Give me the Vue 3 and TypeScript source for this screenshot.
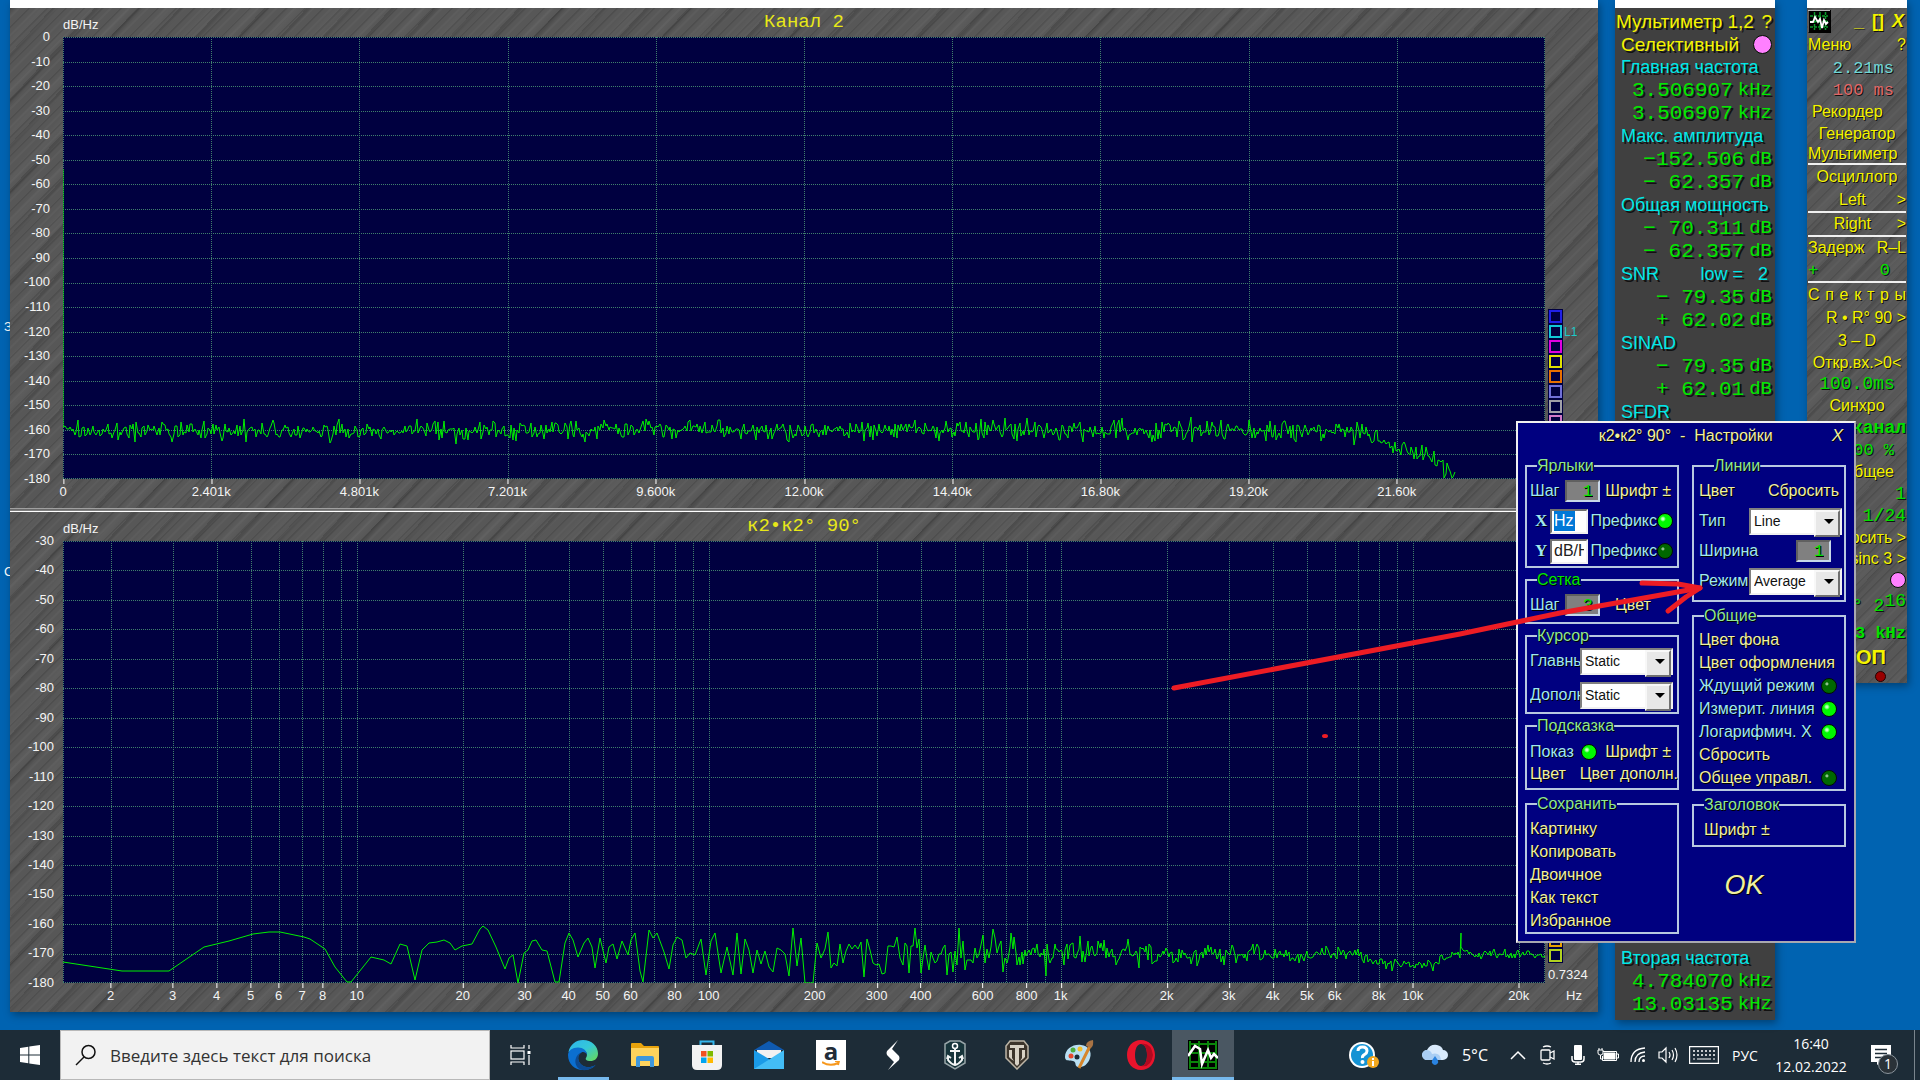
<script setup lang="ts">
import { ref } from 'vue'

interface Tick {
  at: number
  label: string
}

const PLOT_W = 1482
const PLOT_H = 442

function makeNoise(seed: number): () => number {
  let state = seed
  const next = () => {
    state = (state * 1664525 + 1013904223) % 4294967296
    return state / 4294967296
  }
  return () => next() + next() + next() - 1.5
}

function interpolate(table: number[][], x: number): number {
  for (let i = 1; i < table.length; i++) {
    if (x <= table[i][0]) {
      const [x0, y0] = table[i - 1]
      const [x1, y1] = table[i]
      return y0 + ((y1 - y0) * (x - x0)) / (x1 - x0)
    }
  }
  return table[table.length - 1][1]
}

// Linear spectrum: flat noise floor that rolls off near 22 kHz
const linearFloor = [[0, 393], [1270, 393], [1300, 397], [1324, 407], [1357, 417], [1372, 424], [1390, 442], [1482, 520]]

function linearTrace(): string {
  const noise = makeNoise(77)
  const points = ['0,132', '0,390']
  for (let x = 2; x <= 1392; x += x % 3 === 0 ? 1 : 2) {
    const y = interpolate(linearFloor, x) + noise() * 10
    points.push(`${x},${Math.min(PLOT_H, Math.round(y))}`)
  }
  return points.join(' ')
}

// Logarithmic spectrum: sparse bins on the left, dense ones on the right
const sparseBins = '0,421 59,430 106,430 141,406 166,400 190,393 206,391 217,391 241,396 247,398 262,408 272,426 284,441 288,441 308,416 321,419 328,423 337,403 344,405 352,439 359,409 366,402 374,401 381,399 387,402 392,409 399,405 409,403 417,388 420,385 425,389 433,406 442,428 446,417 450,414 455,442 461,412 465,409 469,400 473,399 479,409 484,410 492,441 496,441 502,402 506,392 510,399 515,416 521,402 525,397 529,406 532,427 537,397 543,422 546,406 550,403 554,418 559,400 565,414 568,399 572,392 577,430 580,441 586,389 590,397 594,392 601,411 606,428 610,404 614,396 619,399 623,417 627,412 632,414 638,398 643,434 648,400 652,392 658,432 664,406 670,434'

const denseFloor = [[0, 413], [1290, 413], [1302, 419], [1330, 423], [1370, 422], [1392, 413], [1482, 414]]
const denseSwing = [[660, 42], [760, 36], [860, 24], [1000, 18], [1120, 12], [1220, 9], [1300, 7], [1482, 5]]

function logTrace(): string {
  const noise = makeNoise(2022)
  const points = [sparseBins]
  for (let x = 674; x <= PLOT_W; x += x < 760 ? 4 : x < 840 ? 3 : x < 940 ? 2 : x % 3 === 0 ? 2 : 1) {
    const y = interpolate(denseFloor, x) + noise() * interpolate(denseSwing, x)
    points.push(`${x},${Math.max(387, Math.min(PLOT_H, Math.round(y)))}`)
    if (x === 1396 || x === 1397) points.push('1398,392')
  }
  return points.join(' ')
}

const linearTicks: Tick[] = ['0', '2.401k', '4.801k', '7.201k', '9.600k', '12.00k', '14.40k', '16.80k', '19.20k', '21.60k']
  .map((label, i) => ({ at: i * 10, label }))

const LOG_MIN = Math.log10(1.4648)
const LOG_SPAN = Math.log10(23750) - LOG_MIN
const logAt = (f: number) => ((Math.log10(f) - LOG_MIN) / LOG_SPAN) * 100

const logGrid: number[] = []
for (let decade = 1; decade <= 10000; decade *= 10) {
  for (let n = 1; n < 10; n++) {
    const f = n * decade
    if (f >= 2 && f <= 20000) logGrid.push(logAt(f))
  }
}

const logTicks: Tick[] = [2, 3, 4, 5, 6, 7, 8, 10, 20, 30, 40, 50, 60, 80, 100, 200, 300, 400, 600, 800, 1000, 2000, 3000, 4000, 5000, 6000, 8000, 10000, 20000]
  .map((f) => ({ at: logAt(f), label: f >= 1000 ? `${f / 1000}k` : `${f}` }))

const range = (from: number, count: number) => Array.from({ length: count }, (_, i) => from - i * 10)

const charts = [
  {
    title: 'Канал 2',
    levels: range(0, 19),
    ticks: linearTicks,
    grid: linearTicks.map((t) => t.at),
    trace: linearTrace(),
    swatches: ['#2020e8', '#10c8d8', '#e000e0', '#e0e000', '#e87000', '#7070d8', '#a0a0a8', '#d078c8', '#50a050', '#c04040'],
    bottom: false,
  },
  {
    title: 'к2•к2° 90°',
    levels: range(-30, 16),
    ticks: logTicks,
    grid: [0, ...logGrid],
    trace: logTrace(),
    swatches: ['#e8a000', '#b0d020'],
    bottom: true,
  },
]

interface Reading {
  kind: 'head' | 'value'
  text: string
  unit?: string
}

const head = (text: string): Reading => ({ kind: 'head', text })
const value = (text: string, unit: string): Reading => ({ kind: 'value', text, unit })

const readings: Reading[] = [
  head('Главная частота'), value('3.506907', 'kHz'), value('3.506907', 'kHz'),
  head('Макс. амплитуда'), value('−152.506', 'dB'), value('− 62.357', 'dB'),
  head('Общая мощность'), value('− 70.311', 'dB'), value('− 62.357', 'dB'),
  head('SNR'), value('− 79.35', 'dB'), value('+ 62.02', 'dB'),
  head('SINAD'), value('− 79.35', 'dB'), value('+ 62.01', 'dB'),
  head('SFDR'),
]
const lastReadings: Reading[] = [head('Вторая частота'), value('4.784070', 'kHz'), value('13.03135', 'kHz')]

const labelStep = ref('1')
const unitX = ref('Hz')
const unitY = ref('dB/Hz')
const prefixX = ref(true)
const prefixY = ref(false)
const gridStep = ref('3')
const mainCursor = ref('Static')
const extraCursor = ref('Static')
const hintShown = ref(true)
const lineType = ref('Line')
const lineWidth = ref('1')
const lineMode = ref('Average')
const waiting = ref(false)
const measureLine = ref(true)
const logX = ref(true)
const sharedControl = ref(false)
const saveActions = ['Картинку', 'Копировать', 'Двоичное', 'Как текст', 'Избранное']
</script>

<template>
  <div class="screen">
    <main class="desktop">
      <span class="shortcut shortcut-a">З</span>
      <span class="shortcut shortcut-b">С</span>

      <section class="window spectra steel">
        <article v-for="chart in charts" :key="chart.title" class="chart">
          <header class="chart-head">
            <span class="unit">dB/Hz</span>
            <h2 class="chart-title">{{ chart.title }}</h2>
          </header>
          <div class="chart-body">
            <div class="levels" :class="{ near: chart.bottom }">
              <span v-for="level in chart.levels" :key="level">{{ level }}</span>
            </div>
            <svg class="plot" :viewBox="`0 0 ${PLOT_W} ${PLOT_H}`" preserveAspectRatio="none">
              <g class="grid">
                <line v-for="(level, i) in chart.levels" :key="level" x1="0" :x2="PLOT_W"
                  :y1="Math.min(PLOT_H - 1, Math.round((i * PLOT_H) / (chart.levels.length - 1))) + 0.5"
                  :y2="Math.min(PLOT_H - 1, Math.round((i * PLOT_H) / (chart.levels.length - 1))) + 0.5" />
                <line v-for="at in [...chart.grid, 99.9]" :key="at" y1="0" :y2="PLOT_H"
                  :x1="Math.round((at * PLOT_W) / 100) + 0.5" :x2="Math.round((at * PLOT_W) / 100) + 0.5" />
              </g>
              <polyline class="trace" :points="chart.trace" />
            </svg>
            <div class="side" :class="{ low: chart.bottom }">
              <div v-for="(color, i) in chart.swatches" :key="color" class="swatch-row">
                <button class="swatch" type="button" :style="{ borderColor: color }" :aria-label="`Линия ${i + 1}`"></button>
                <span v-if="!chart.bottom && i === 1" class="swatch-name">L1</span>
              </div>
              <span v-if="chart.bottom" class="resolution">0.7324</span>
            </div>
          </div>
          <footer class="chart-foot">
            <div class="ticks">
              <span v-for="tick in chart.ticks" :key="tick.label" class="tick" :style="{ left: tick.at + '%' }">{{ tick.label }}</span>
            </div>
            <span class="foot-unit">{{ chart.bottom ? 'Hz' : '' }}</span>
          </footer>
        </article>
      </section>

      <section class="window meter">
        <div class="meter-row meter-title"><span>Мультиметр 1,2</span><button type="button" class="bare">?</button></div>
        <label class="meter-row meter-select"><span>Селективный</span><input type="checkbox" class="led pink big" checked /></label>
        <div v-for="(r, i) in readings" :key="i" class="meter-row" :class="r.kind">
          <span>{{ r.text }}</span>
          <span v-if="r.text === 'SNR'" class="low-limit">low =&nbsp;&nbsp; 2</span>
          <span v-if="r.unit" class="meter-unit">{{ r.unit }}</span>
        </div>
        <div class="meter-tail">
          <div v-for="(r, i) in lastReadings" :key="i" class="meter-row" :class="r.kind">
            <span>{{ r.text }}</span>
            <span v-if="r.unit" class="meter-unit">{{ r.unit }}</span>
          </div>
        </div>
      </section>

      <nav class="window menu steel">
        <div class="row r24 title-row">
          <svg width="23" height="23" viewBox="0 0 23 23">
            <rect width="23" height="23" fill="#000" />
            <path d="M0 22.500V.5H22" fill="none" stroke="#b8b8b8" />
            <path d="M2 6h18M2 11.500h18M2 17h18M6.500 2v18M12 2v18M17.500 2v18" stroke="#0b9a2a" stroke-width="1.500" stroke-dasharray="3 1" />
            <path d="M2 12h3l2-5 3 5 2-3 2 9 2-8 2 4 2-2" fill="none" stroke="#fff" stroke-width="1.800" />
          </svg>
          <span class="window-keys"><button type="button" class="bare">_</button><button type="button" class="bare">[]</button><button type="button" class="bare slanted">X</button></span>
        </div>
        <div class="row r24 split"><button type="button" class="bare">Меню</button><button type="button" class="bare">?</button></div>
        <div class="row r22 mono aqua inset">2.21<b>ms</b></div>
        <div class="row r22 mono rose inset">100 <b>ms</b></div>
        <button type="button" class="bare row r22 indent">Рекордер</button>
        <button type="button" class="bare row r22 center">Генератор</button>
        <button type="button" class="bare row r20 ruled">Мультиметр</button>
        <button type="button" class="bare row r24 center">Осциллогр</button>
        <div class="row r24 ruled split"><i></i><button type="button" class="bare">Left</button><button type="button" class="bare">&gt;</button></div>
        <div class="row r24 ruled split"><i></i><button type="button" class="bare">Right</button><button type="button" class="bare">&gt;</button></div>
        <div class="row r22 split"><span>Задерж</span><span>R–L</span></div>
        <div class="row r24 ruled split mono green"><span>+</span><span class="zero">0</span></div>
        <div class="row r24 split"><span v-for="(c, i) in 'Спектры'" :key="i">{{ c }}</span></div>
        <div class="row r22 end"><button type="button" class="bare">R • R° 90 &gt;</button></div>
        <button type="button" class="bare row r24 center">3 – D</button>
        <button type="button" class="bare row r20 center">Откр.вх.&gt;0&lt;</button>
        <div class="row r22 mono large green center">100.0<b>ms</b></div>
        <button type="button" class="bare row r22 center">Синхро</button>
        <div class="row r22 mono large green end"><b>канал</b></div>
        <div class="row r22 mono green end inset">100 %</div>
        <div class="row r22 end inset"><span>Общее</span></div>
        <div class="row r22 mono large green end">1</div>
        <div class="row r22 mono large green end">1/24</div>
        <div class="row r22 end"><span>Сбросить &gt;</span></div>
        <div class="row r20 end"><span>sinc 3 &gt;</span></div>
        <div class="row r22 end"><input type="checkbox" class="led pink" aria-label="Фильтр" checked /></div>
        <div class="row r30 mono large green end">R° 2<sup>16</sup></div>
        <div class="row r24 mono green end"><b>3 kHz</b></div>
        <div class="row r24 end stop-row"><button type="button" class="bare stop">СТОП</button></div>
        <div class="row r14 end inset"><span class="lamp"></span></div>
      </nav>

      <form class="dialog" @submit.prevent>
        <header class="dialog-head">
          <h1>к2•к2° 90°&nbsp; -&nbsp; Настройки</h1>
          <button type="button" class="bare slanted close">X</button>
        </header>
        <div class="columns">
          <div class="column">
            <fieldset>
              <legend>Ярлыки</legend>
              <div class="line"><label class="step" for="label-step">Шаг</label><input id="label-step" v-model="labelStep" class="number" type="text" /><button type="button" class="bare push">Шрифт ±</button></div>
              <div class="line"><label class="axis" for="unit-x">X</label><span class="unit-box"><input id="unit-x" v-model="unitX" class="picked" type="text" /></span><label class="prefix">Префикс<input v-model="prefixX" class="led" type="checkbox" /></label></div>
              <div class="line"><label class="axis" for="unit-y">Y</label><span class="unit-box"><input id="unit-y" v-model="unitY" type="text" /></span><label class="prefix">Префикс<input v-model="prefixY" class="led" type="checkbox" /></label></div>
            </fieldset>
            <fieldset class="grid-box">
              <legend class="active">Сетка</legend>
              <div class="line"><label class="step" for="grid-step">Шаг</label><input id="grid-step" v-model="gridStep" class="number" type="text" /><button type="button" class="bare shifted">Цвет</button></div>
            </fieldset>
            <fieldset class="cursor-box">
              <legend>Курсор</legend>
              <div class="line tall"><label class="clipped" for="main-cursor">Главный</label><span class="combo"><select id="main-cursor" v-model="mainCursor"><option>Static</option></select></span></div>
              <div class="line tall"><label class="clipped" for="extra-cursor">Дополн.</label><span class="combo"><select id="extra-cursor" v-model="extraCursor"><option>Static</option></select></span></div>
            </fieldset>
            <fieldset class="hint-box">
              <legend>Подсказка</legend>
              <div class="line short"><label class="show">Показ<input v-model="hintShown" class="led" type="checkbox" /></label><button type="button" class="bare push">Шрифт ±</button></div>
              <div class="line short"><button type="button" class="bare">Цвет</button><button type="button" class="bare extra">Цвет дополн.</button></div>
            </fieldset>
            <fieldset class="save-box">
              <legend>Сохранить</legend>
              <div v-for="action in saveActions" :key="action" class="line short"><button type="button" class="bare">{{ action }}</button></div>
            </fieldset>
          </div>
          <div class="column right">
            <fieldset class="lines-box">
              <legend class="deep">Линии</legend>
              <div class="line spread"><button type="button" class="bare">Цвет</button><button type="button" class="bare">Сбросить</button></div>
              <div class="line"><label class="clipped" for="line-type">Тип</label><span class="combo"><select id="line-type" v-model="lineType"><option>Line</option></select></span></div>
              <div class="line spread"><label for="line-width">Ширина</label><input id="line-width" v-model="lineWidth" class="number away" type="text" /></div>
              <div class="line"><label class="clipped" for="line-mode">Режим</label><span class="combo"><select id="line-mode" v-model="lineMode"><option>Average</option></select></span></div>
            </fieldset>
            <fieldset class="common-box">
              <legend>Общие</legend>
              <div class="line short"><button type="button" class="bare">Цвет фона</button></div>
              <div class="line short"><button type="button" class="bare">Цвет оформления</button></div>
              <label class="line short spread">Ждущий режим<input v-model="waiting" class="led" type="checkbox" /></label>
              <label class="line short spread">Измерит. линия<input v-model="measureLine" class="led" type="checkbox" /></label>
              <label class="line short spread">Логарифмич. X<input v-model="logX" class="led" type="checkbox" /></label>
              <div class="line short"><button type="button" class="bare">Сбросить</button></div>
              <label class="line short spread warm">Общее управл.<input v-model="sharedControl" class="led" type="checkbox" /></label>
            </fieldset>
            <fieldset class="heading-box">
              <legend>Заголовок</legend>
              <div class="line short"><button type="button" class="bare">Шрифт ±</button></div>
            </fieldset>
            <button type="submit" class="bare slanted ok">OK</button>
          </div>
        </div>
      </form>

      <svg class="markup" width="760" height="760" viewBox="0 0 760 760" aria-hidden="true">
        <g fill="none" stroke="#ed1c24" stroke-width="5" stroke-linecap="round" stroke-linejoin="round">
          <path d="M14 688L300 634L400 613L540 588" />
          <path d="M482 583L518 584L540 588L526 597L508 611" />
        </g>
        <ellipse cx="165" cy="736" rx="3" ry="2" fill="#ed1c24" />
      </svg>
    </main>

    <footer class="taskbar">
      <button type="button" class="task start" aria-label="Пуск">
        <svg width="20" height="20" viewBox="0 0 20 20" fill="#fff"><path d="M0 3l8.300-1.200v7.700H0zM9.300 1.600L20 0v9.500H9.300zM0 10.500h8.300v7.700L0 17zM9.300 10.500H20V20L9.300 18.400z" /></svg>
      </button>
      <label class="search">
        <svg width="22" height="22" viewBox="0 0 22 22" fill="none" stroke="#111" stroke-width="1.500"><circle cx="13.500" cy="8" r="6.500" /><path d="M9 13L1 21" /></svg>
        <input type="text" placeholder="Введите здесь текст для поиска" aria-label="Поиск" />
      </label>
      <button type="button" class="task" aria-label="Представление задач">
        <svg width="22" height="20" viewBox="0 0 22 20" fill="none" stroke="#fff" stroke-width="1.200"><path d="M1 0v3h13V0M1 20v-3h13v3M19 0v4M19 10v10" /><rect x="1" y="6" width="13" height="8" /><path d="M17.500 6h3v3h-3z" fill="#fff" stroke="none" /></svg>
      </button>
      <button type="button" class="task open" aria-label="Edge">
        <svg width="32" height="32" viewBox="0 0 32 32">
          <defs>
            <linearGradient id="edge-top" x1="0" y1="0" x2="1" y2="1"><stop offset="0" stop-color="#2db4ee" /><stop offset=".5" stop-color="#35c8d8" /><stop offset="1" stop-color="#6bdc50" /></linearGradient>
          </defs>
          <path d="M1.500 13C3 5.500 9 1 16 1c8.500 0 15 6 15 13.500 0 5-3.500 7.500-7.500 7.500-4 0-5.500-1.500-4.500-3 3-5-1-8.500-6-8.500-5 0-10 2-11.500 2.500z" fill="url(#edge-top)" />
          <path d="M1 16c0-4.500 4.500-7.500 10-7.500 5 0 9 3 9 7.500-1-2.500-3.500-3.500-5.500-2.500-4.500 2-4.500 9.500 1 13 4 2.500 9 2 13-.5C25.500 30 20.500 31 16 31 8 31 1 25 1 16z" fill="#0b6fd0" />
          <path d="M14.500 13.500c-4.500 2-4.500 9.500 1 13 4.500 3 10 1.500 13.500-1-4 5-10 6.500-15 5.300C6 27.500 7 16 14.500 13.500z" fill="#0c4a92" />
        </svg>
      </button>
      <button type="button" class="task" aria-label="Проводник">
        <svg width="30" height="26" viewBox="0 0 30 26"><path d="M1 2q0-1 1-1h9l3 3h14q1 0 1 1v8H1z" fill="#e8a30c" /><path d="M1 6h28v17q0 1-1 1H2q-1 0-1-1z" fill="#ffd35c" /><path d="M6 25V16q0-2 2-2h14q2 0 2 2v9h-4v-6H10v6z" fill="#3f97dc" /></svg>
      </button>
      <button type="button" class="task" aria-label="Магазин">
        <svg width="30" height="30" viewBox="0 0 30 30"><path d="M8.500 6V1.500h13V6" fill="none" stroke="#35b6ec" stroke-width="2" /><path d="M0 5h30v20q0 5-5 5H5q-5 0-5-5z" fill="#f2f2f2" /><path d="M9 11h5.500v5.500H9z" fill="#f25022" /><path d="M15.500 11H21v5.500h-5.500z" fill="#7fba00" /><path d="M9 17.500h5.500V23H9z" fill="#00a4ef" /><path d="M15.500 17.500H21V23h-5.500z" fill="#ffb900" /></svg>
      </button>
      <button type="button" class="task" aria-label="Почта">
        <svg width="30" height="28" viewBox="0 0 30 28"><path d="M0 9L15 0l15 9z" fill="#0f5ab0" /><path d="M3 9h24v8H3z" fill="#f1f1f1" /><path d="M0 9l15 9v10H0z" fill="#1a9be8" /><path d="M30 9v19H0z" fill="#43bdf6" /><path d="M3 9h24L15 17z" fill="#f1f1f1" /></svg>
      </button>
      <button type="button" class="task" aria-label="Amazon">
        <span class="amazon">a<svg width="18" height="6" viewBox="0 0 18 6" fill="none" stroke="#f7981d" stroke-width="2"><path d="M0 1q8 5 16 1M13 0l4 0-1 4" /></svg></span>
      </button>
      <button type="button" class="task" aria-label="S">
        <svg width="14" height="30" viewBox="0 0 14 30" fill="#fff"><path d="M12 0L1 11q-1 2 0 4l7 7-6 8 11-10q1-2 0-4L6 9z" /></svg>
      </button>
      <button type="button" class="task" aria-label="Корабли">
        <svg width="22" height="30" viewBox="0 0 22 30" fill="none"><path d="M1 4L6 1h10l5 3v19l-10 6L1 23z" fill="#17343a" stroke="#98a5a8" stroke-width="1.500" /><circle cx="11" cy="6" r="2.500" stroke="#fff" stroke-width="1.500" /><path d="M11 8v16M6 11h10M4 16v4q3 4 7 5 4-1 7-5v-4M3 19l1-3 3 2M15 18l3-2 1 3" stroke="#f2f4f4" stroke-width="2" /></svg>
      </button>
      <button type="button" class="task" aria-label="Танки">
        <svg width="24" height="30" viewBox="0 0 24 30" fill="none"><path d="M5 1h14l4 5v12L12 29 1 18V6z" fill="#3c352c" stroke="#bdb5a6" stroke-width="1.500" /><path d="M5 5h14v3h-5v16l-2 2-2-2V8H5zM4 10h3v8l2 3-3-2-2-2zM20 10h-3v8l-2 3 3-2 2-2z" fill="#d8d2c6" /></svg>
      </button>
      <button type="button" class="task" aria-label="Paint">
        <svg width="30" height="30" viewBox="0 0 30 30"><path d="M1 17C1 9 9 4 17 5c8 1 11 7 9 13-2 7-8 10-12 9-4-1-1-5-5-6-3-1-8 1-8-4z" fill="#b9dff2" /><circle cx="7" cy="16" r="2.500" fill="#e8472b" /><circle cx="9" cy="10" r="2.500" fill="#4fae3c" /><circle cx="16" cy="9" r="2.500" fill="#f4bf2b" /><circle cx="13" cy="17" r="2.500" fill="#1d2c37" /><path d="M15 28L26 6" stroke="#d7862b" stroke-width="3" /><path d="M22 6q0-5 7-6 1 5-2 8z" fill="#a87344" /></svg>
      </button>
      <button type="button" class="task" aria-label="Opera">
        <svg width="30" height="30" viewBox="0 0 30 30"><path fill-rule="evenodd" d="M15 0c8.300 0 14 6.500 14 15s-5.700 15-14 15S1 23.500 1 15 6.700 0 15 0zm0 4c-4 0-6 5-6 11s2 11 6 11 6-5 6-11-2-11-6-11z" fill="#e8142c" /><path d="M15 4c4 0 6 5 6 11s-2 11-6 11q10 2 12-11Q25 2 15 4z" fill="#b00a20" /></svg>
      </button>
      <button type="button" class="task current" aria-label="Анализатор">
        <svg width="30" height="30" viewBox="0 0 30 30"><path d="M0 0h30v30H0z" fill="#000" /><path d="M1 4h28M1 13h28M1 22h28M1 28h28M2 1v28M11 1v28M20 1v28M28 1v28" stroke="#0a850a" stroke-width="2" /><path d="M0 16l7-10 5 3 2 15 6-14 3 8 3-4 4 4" fill="none" stroke="#fff" stroke-width="2.500" /></svg>
      </button>

      <div class="tray">
        <button type="button" class="cell w86" aria-label="Справка">
          <svg width="30" height="28" viewBox="0 0 30 28"><circle cx="13" cy="14" r="13" fill="#fff" /><circle cx="13" cy="14" r="11" fill="#1593d4" /><path d="M9 10q0-4 4.500-4t4.500 4q0 2-2.500 3.500T13.500 17" fill="none" stroke="#fff" stroke-width="3" /><circle cx="13.500" cy="21" r="2" fill="#fff" /><circle cx="24" cy="21" r="6" fill="#f4a91f" /><path d="M23 17h2v2h-2zM23 20h2v5h-2z" fill="#fff" /></svg>
        </button>
        <button type="button" class="cell w96 weather">
          <svg width="26" height="22" viewBox="0 0 26 22"><path d="M6 16a5 5 0 0 1-1-10q3-6 10-5 5 1 6 5a5 5 0 0 1 0 10z" fill="#d8eafc" /><path d="M6 16a5 5 0 0 1-2-10q5 0 6 4 8-2 9 6z" fill="#a9cef4" /><path d="M13 12q4 5 3 7-3 4-6 0-1-2 3-7z" fill="#2a83e0" /></svg>
          <span>5°C</span>
        </button>
        <button type="button" class="cell w30" aria-label="Скрытые значки"><svg width="16" height="10" viewBox="0 0 16 10" fill="none" stroke="#fff" stroke-width="1.500"><path d="M1 9l7-7 7 7" /></svg></button>
        <button type="button" class="cell w30" aria-label="Камера"><svg width="16" height="20" viewBox="0 0 16 20" fill="none" stroke="#fff" stroke-width="1.300"><rect x="1" y="5" width="9" height="10" rx="1" /><path d="M10 8l4-2v8l-4-2M3 2q4-2 8 0M3 18q4 2 8 0" /></svg></button>
        <button type="button" class="cell w30" aria-label="Микрофон"><svg width="14" height="20" viewBox="0 0 14 20" fill="none" stroke="#fff" stroke-width="1.500"><rect x="3" y="0" width="8" height="15" rx="1" fill="#fff" stroke="none" /><path d="M1 11v3q0 3 3 3h6q3 0 3-3v-3M7 17v2M4 19.200h6" /></svg></button>
        <button type="button" class="cell w30" aria-label="Батарея"><svg width="22" height="14" viewBox="0 0 22 14" fill="none" stroke="#fff"><path d="M6 3.500h13.500v9H5.500V8M20 6h1.500v4H20" /><path d="M7 5h11v6H7z" fill="#fff" /><path d="M1 2h5v3q0 2-2.500 2T1 5zM2 0v2M5 0v2M3.500 7v4H6" /></svg></button>
        <button type="button" class="cell w30" aria-label="Сеть"><svg width="16" height="16" viewBox="0 0 16 16" fill="none" stroke="#fff" stroke-width="1.300"><path d="M1 15Q1 2 15 1M5 15Q5 6 15 5M9 15q0-6 6-6" /><circle cx="13.500" cy="13.500" r="1.500" fill="#fff" stroke="none" /></svg></button>
        <button type="button" class="cell w30" aria-label="Громкость"><svg width="21" height="18" viewBox="0 0 21 18" fill="none" stroke="#fff" stroke-width="1.200"><path d="M1 6h3l4-4v14l-4-4H1zM11 6q2 3 0 6M14 4q3 5 0 10M17 2q4 7 0 14" /></svg></button>
        <button type="button" class="cell w42" aria-label="Клавиатура"><svg width="30" height="18" viewBox="0 0 30 18" fill="none" stroke="#fff" stroke-width="1.200"><path d="M.6.600h28.800v16.800H.6z" /><path d="M4 5h23M4 9h23" stroke-dasharray="2 2" stroke-width="1.500" /><path d="M4 13h2M8 13h14M24 13h2" /></svg></button>
        <button type="button" class="cell w40">РУС</button>
        <button type="button" class="cell w92 clock"><span>16:40</span><span>12.02.2022</span></button>
        <button type="button" class="cell w48 notes" aria-label="Уведомления">
          <svg width="20" height="20" viewBox="0 0 20 20"><path d="M0 0h20v17H10l-4 3v-3H0z" fill="#fff" /><path d="M4 4.500h12M4 8.500h12M4 12.500h8" stroke="#1d2c37" stroke-width="1.500" /></svg>
          <span class="badge">1</span>
        </button>
        <button type="button" class="reveal" aria-label="Показать рабочий стол"></button>
      </div>
    </footer>
  </div>
</template>

<style>
body {
  margin: 0;
  background: #0063b1;
}
</style>

<style scoped>
* {
  box-sizing: border-box;
}

.screen {
  display: flex;
  flex-direction: column;
  height: 100vh;
  overflow: hidden;
  font-family: "Liberation Sans", Arial, sans-serif;
}

.bare {
  padding: 0;
  border: 0;
  background: none;
  color: inherit;
  font: inherit;
  text-shadow: inherit;
  white-space: nowrap;
}

.slanted {
  font-style: italic;
}

.desktop {
  position: relative;
  display: flex;
  align-items: flex-start;
  flex: 1;
  min-height: 0;
  padding: 0 13px 0 10px;
  background: #0063b1;
}

.shortcut {
  position: absolute;
  left: 4px;
  color: #fff;
  font-size: 13px;
}

.shortcut-a {
  top: 319px;
}

.shortcut-b {
  top: 564px;
}

.window {
  position: relative;
  border-top: 8px solid #fff;
  box-shadow: 2px 3px 8px rgba(0, 0, 0, 0.35);
}

.steel {
  background-color: #575757;
  background-image:
    repeating-linear-gradient(135deg, rgba(0, 0, 0, 0.1) 0 1px, transparent 2px 5px, rgba(255, 255, 255, 0.03) 6px 7px, transparent 8px 13px),
    repeating-linear-gradient(133deg, rgba(0, 0, 0, 0.12) 0 2px, transparent 5px 18px, rgba(255, 255, 255, 0.03) 24px, transparent 31px);
}

/* Spectrum window */
.spectra {
  display: flex;
  flex-direction: column;
  flex: 1;
  align-self: stretch;
  min-width: 0;
  margin: 0 17px 18px 0;
}

.chart {
  display: flex;
  flex-direction: column;
  flex: 1;
  min-height: 0;
  color: #f4f4f4;
  font-size: 13px;
  line-height: 16px;
}

.chart + .chart {
  padding-top: 4px;
  background: linear-gradient(#a0a0a0 1px, #6a6a6a 1px 2px, #808080 2px 3px, #fff 3px 4px, transparent 4px);
}

.chart-head {
  display: grid;
  grid-template-columns: 1fr auto 1fr;
  height: 29px;
  padding: 3px 0 0 53px;
}

.unit {
  padding-top: 6px;
}

.chart-title {
  margin: 0 53px 0 0;
  color: #e8e818;
  font: 19px/22px "Liberation Mono", monospace;
}

.chart-body {
  display: flex;
  flex: 1;
  min-height: 0;
}

.levels {
  display: flex;
  flex-direction: column;
  justify-content: space-between;
  width: 53px;
  margin: -8px 0;
  padding-right: 13px;
  text-align: right;
}

.levels.near {
  padding-right: 9px;
}

.plot {
  flex: 1;
  width: 0;
  height: 100%;
  background: #000040;
}

.grid line {
  stroke: #40806c;
  stroke-dasharray: 1 1;
  shape-rendering: crispEdges;
  vector-effect: non-scaling-stroke;
}

.trace {
  fill: none;
  stroke: #00f000;
  vector-effect: non-scaling-stroke;
}

.side {
  display: flex;
  flex-direction: column;
  width: 53px;
  padding: 272px 0 0 3px;
  overflow: hidden;
}

.side.low {
  justify-content: flex-end;
  padding-top: 0;
}

.swatch-row {
  display: flex;
  flex: none;
  height: 15px;
}

.swatch {
  width: 13px;
  height: 13px;
  margin: 1px;
  padding: 0;
  border: 2px solid;
  outline: 1px solid #000040;
  background: #000040;
}

.swatch-name {
  padding-left: 1px;
  color: #20c8c8;
  font-size: 12px;
}

.resolution {
  padding: 4px 0 0;
}

.chart-foot {
  display: flex;
  height: 29px;
  padding-left: 53px;
}

.ticks {
  position: relative;
  flex: 1;
}

.tick {
  position: absolute;
  top: 5px;
  transform: translateX(-50%);
}

.tick::before {
  position: absolute;
  top: -5px;
  left: 50%;
  width: 1px;
  height: 5px;
  background: #fff;
  content: "";
}

.foot-unit {
  width: 53px;
  padding: 5px 0 0 21px;
}

/* Multimeter */
.meter {
  display: flex;
  flex-direction: column;
  align-self: stretch;
  width: 160px;
  margin: 0 32px 10px 0;
  padding: 2px 3px 4px 6px;
  background: #404040;
  color: #f4f400;
  font-size: 19px;
  text-shadow: 2px 2px 0 #111;
}

.meter-row {
  display: flex;
  flex: none;
  align-items: center;
  justify-content: space-between;
  height: 23px;
  line-height: 23px;
  white-space: pre;
}

.meter-title {
  margin-left: -5px;
}

.head {
  color: #00e8e8;
  font-size: 18px;
}

.value {
  justify-content: flex-end;
  gap: 5px;
  color: #00e800;
  font-family: "Liberation Mono", monospace;
  font-size: 21px;
}

.meter-unit {
  font-size: 19px;
}

.low-limit {
  padding-right: 4px;
}

.meter-tail {
  margin-top: auto;
}

/* LED tick boxes */
.led {
  flex: none;
  width: 16px;
  height: 16px;
  margin: 0;
  border: 1px solid #001000;
  border-radius: 50%;
  background: radial-gradient(circle at 35% 35%, #90c090 0 1px, #006800 2px);
  appearance: none;
}

.led:checked {
  background: radial-gradient(circle at 35% 35%, #c0ffc0 0 1px, #00f800 3px);
}

.led.pink:checked {
  background: #ff80ff;
}

.led.big {
  width: 19px;
  height: 19px;
}

/* Side menu */
.menu {
  flex: none;
  width: 100px;
  padding-top: 1px;
  color: #f4f400;
  font-size: 16px;
  text-shadow: 1px 1px 0 #111;
}

.row {
  display: flex;
  align-items: center;
  width: 98px;
  margin: 0 1px;
  white-space: pre;
}

.r14 { height: 14px; }
.r20 { height: 20px; }
.r22 { height: 22px; }
.r24 { height: 24px; }
.r30 { height: 30px; }

.title-row,
.split {
  justify-content: space-between;
}

.window-keys {
  display: flex;
  gap: 8px;
  padding-right: 2px;
  font-size: 18px;
  font-weight: bold;
}

.center {
  justify-content: center;
  text-align: center;
}

.end {
  justify-content: flex-end;
}

.indent {
  padding-left: 4px;
}

.inset {
  justify-content: flex-end;
  padding-right: 12px;
}

.stop-row {
  padding-right: 20px;
}

.ruled {
  border-bottom: 2px solid #f0f0f0;
}

.mono {
  font-family: "Liberation Mono", monospace;
  font-size: 17px;
}

.mono.large {
  font-size: 18px;
}

.mono b {
  font-weight: normal;
}

.end.mono b {
  font-weight: bold;
}

.aqua { color: #70d8d8; }
.rose { color: #e06868; }
.green { color: #00e000; }

.zero {
  padding-right: 16px;
}

.row sup {
  align-self: flex-start;
  font-size: 18px;
  line-height: 20px;
}

.stop {
  font-size: 20px;
  font-weight: bold;
}

.lamp {
  width: 11px;
  height: 11px;
  margin-right: 8px;
  border: 1px solid #200;
  border-radius: 50%;
  background: #900;
}

/* Settings dialog */
.dialog {
  position: absolute;
  top: 421px;
  right: 64px;
  width: 340px;
  height: 522px;
  border: 2px solid;
  border-color: #f0f0f0 #a8a8b0 #a8a8b0 #f0f0f0;
  background: #000080;
  color: #f0f0a0;
  font-size: 16px;
  text-shadow: 1px 1px 0 #000;
}

.dialog-head {
  display: flex;
  justify-content: flex-end;
  gap: 59px;
  height: 35px;
  padding-right: 11px;
  line-height: 26px;
}

.dialog-head h1 {
  margin: 0;
  font-size: 16px;
  font-weight: normal;
}

.dialog-head .close {
  height: 26px;
  font-size: 17px;
}

.columns {
  display: flex;
  justify-content: space-between;
  padding: 0 8px 0 7px;
}

.column {
  display: flex;
  flex-direction: column;
  gap: 4px;
  width: 154px;
}

.column.right {
  gap: 6px;
}

fieldset {
  min-width: 0;
  margin: 0;
  padding: 2px 2px 0 3px;
  border: 2px solid #b8c8e0;
}

.right fieldset {
  padding-left: 5px;
}

legend {
  height: 16px;
  margin-left: 7px;
  padding: 0;
  color: #90e890;
  line-height: 16px;
}

.right legend {
  margin-left: 5px;
}

legend.active {
  color: #00e800;
}

.right legend.deep {
  margin-left: 15px;
}

.grid-box {
  padding-bottom: 2px;
}

.cursor-box {
  padding-top: 0;
}

.hint-box {
  padding-top: 7px;
  padding-bottom: 3px;
}

.save-box {
  margin-top: 2px;
  padding-top: 5px;
}

.lines-box {
  padding-bottom: 4px;
}

.common-box {
  padding-top: 4px;
}

.heading-box {
  padding-top: 5px;
  padding-bottom: 4px;
}

.heading-box .line {
  padding-left: 5px;
}

.line {
  display: flex;
  align-items: center;
  height: 30px;
  white-space: nowrap;
}

.line.short {
  height: 23px;
}

.hint-box .line.short {
  height: 22px;
}

.line.tall {
  height: 34px;
}

.spread {
  justify-content: space-between;
  padding-right: 3px;
}

.short.spread {
  padding-right: 5px;
}

label {
  color: #a0e8f0;
}

label.warm {
  color: #f0f0a0;
}

.meter-select {
  color: inherit;
}

.step {
  width: 35px;
}

.number {
  width: 35px;
  height: 22px;
  margin: 0;
  padding: 0 5px 0 0;
  border: 2px solid;
  border-color: #606060 #c8d8e8 #c8d8e8 #606060;
  background: #808080;
  color: #00e000;
  font: 17px "Liberation Mono", monospace;
  text-align: right;
  text-shadow: 1px 1px 0 #000;
}

.number.away {
  margin-right: 8px;
}

.push {
  margin-left: auto;
  margin-right: 4px;
}

.shifted {
  margin-left: 15px;
}

.axis {
  width: 20px;
  padding-left: 5px;
  font: bold 17px "Liberation Serif", serif;
}

.unit-box {
  display: flex;
  align-items: center;
  width: 38px;
  height: 25px;
  padding: 0 2px;
  border: 2px solid;
  border-color: #707070 #f0f0f0 #f0f0f0 #707070;
  background: #fff;
}

.unit-box input {
  width: 100%;
  height: 20px;
  padding: 0;
  border: 0;
  background: none;
  color: #202020;
  font: 16px "Liberation Sans", sans-serif;
}

.unit-box .picked {
  width: 21px;
  background: #0078d7;
  color: #fff;
}

.prefix {
  display: flex;
  align-items: center;
  margin-left: auto;
  margin-right: 2px;
}

.show {
  display: flex;
  align-items: center;
  gap: 7px;
}

.extra {
  margin-left: auto;
  margin-right: -3px;
}

.clipped {
  width: 50px;
  overflow: hidden;
}

.combo {
  position: relative;
  flex: none;
  width: 93px;
  height: 27px;
  border: 2px solid;
  border-color: #808080 #f0f0f0 #f0f0f0 #808080;
  background: #fff;
}

.combo::before {
  position: absolute;
  top: 0;
  right: 0;
  width: 22px;
  height: 23px;
  border: 2px solid;
  border-color: #f8f8f8 #707070 #707070 #f8f8f8;
  background: #e8e8e8;
  content: "";
}

.combo::after {
  position: absolute;
  top: 9px;
  right: 6px;
  border: 5px solid transparent;
  border-top-color: #000;
  border-bottom: 0;
  content: "";
  pointer-events: none;
}

.combo select {
  position: relative;
  width: 100%;
  height: 23px;
  padding: 0 0 0 3px;
  border: 0;
  background: none;
  color: #101010;
  font: 14px "Liberation Sans", sans-serif;
  text-shadow: none;
  appearance: none;
}

.unit-box input {
  text-shadow: none;
}

.ok {
  align-self: center;
  margin-top: 17px;
  margin-right: 50px;
  font-size: 27px;
  line-height: 30px;
}

.markup {
  position: absolute;
  top: 0;
  right: 0;
  pointer-events: none;
}

/* Taskbar */
.taskbar {
  display: flex;
  flex: none;
  height: 50px;
  background: #1d2c37;
  color: #fff;
  font-family: "Open Sans", "Noto Sans", sans-serif;
}

.task {
  display: flex;
  align-items: center;
  justify-content: center;
  width: 62px;
  height: 50px;
  padding: 0;
  border: 0;
  background: none;
}

.task.start {
  width: 60px;
}

.task.open {
  background: linear-gradient(#76b9ed, #76b9ed) center bottom / 51px 3px no-repeat;
}

.task.current {
  padding-top: 3px;
  border-bottom: 3px solid #76b9ed;
  background: #4a5762;
}

.search {
  display: flex;
  align-items: center;
  gap: 13px;
  width: 430px;
  padding-left: 14px;
  border: 1px solid #b8b8b8;
  background: #f2f2f2;
}

.search input {
  flex: 1;
  min-width: 0;
  padding: 0;
  border: 0;
  outline: 0;
  background: none;
  font: 17px "Open Sans", "Noto Sans", sans-serif;
}

.search input::placeholder {
  color: #333;
}

.amazon {
  display: flex;
  flex-direction: column;
  align-items: center;
  width: 30px;
  height: 30px;
  background: #fff;
  color: #222c38;
  font: bold 24px/21px "Open Sans", sans-serif;
}

.tray {
  display: flex;
  margin-left: auto;
}

.cell {
  display: flex;
  align-items: center;
  justify-content: center;
  padding: 0;
  border: 0;
  background: none;
  color: #fff;
  font: 14px/23px "Open Sans", "Noto Sans", sans-serif;
}

.w30 { width: 30px; }
.w40 { width: 40px; }
.w42 { width: 42px; }
.w48 { width: 48px; }
.w86 { width: 86px; }
.w92 { width: 92px; }
.w96 { width: 96px; }

.weather {
  gap: 14px;
  font-size: 16px;
}

.clock {
  flex-direction: column;
}

.notes {
  position: relative;
}

.badge {
  position: absolute;
  right: 7px;
  bottom: 6px;
  width: 20px;
  height: 20px;
  border: 1px solid #8a949c;
  border-radius: 50%;
  background: #2a3238;
  line-height: 18px;
}

.reveal {
  width: 6px;
  margin-left: 9px;
  padding: 0;
  border: 0;
  border-left: 1px solid #7a858d;
  background: none;
}
</style>
